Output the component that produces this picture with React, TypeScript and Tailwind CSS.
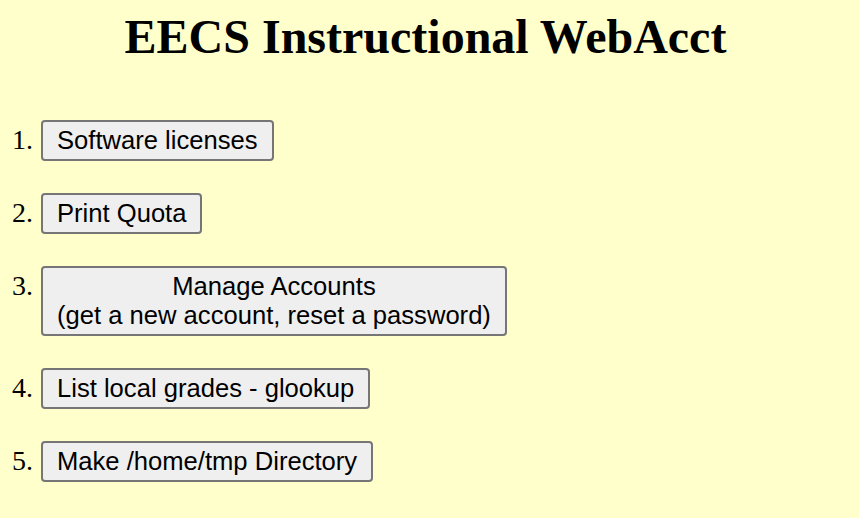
import React from 'react';

const items: React.ReactNode[] = [
    'Software licenses',
    'Print Quota',
    <>Manage Accounts<br />(get a new account, reset a password)</>,
    'List local grades - glookup',
    'Make /home/tmp Directory',
];

const App = () => {
    return (
        <div className="min-h-[518px] w-full bg-[#ffffcc] text-black">
            {/* Title */}
            <h1 className="pr-[8px] pt-[9px] text-center font-['Liberation_Serif',serif] text-[48px] font-bold leading-[55px]">
                EECS Instructional WebAcct
            </h1>

            {/* Menu */}
            <ol className="mt-[56px] flex flex-col gap-[32.5px]">
                {items.map((label, i) => (
                    <li key={i} className="flex items-baseline">
                        <span className="w-[33px] text-right font-['Liberation_Serif',serif] text-[28px] leading-[20px]">
                            {i + 1}.
                        </span>
                        <button className="ml-[8px] rounded-[4px] border-2 border-[#767676] bg-[#efefef] px-[14px] pb-[3.5px] pt-[4px] text-center font-['Liberation_Sans',Arial,sans-serif] text-[25.6px] leading-[29px] text-black">
                            {label}
                        </button>
                    </li>
                ))}
            </ol>
        </div>
    );
};

export default App;
